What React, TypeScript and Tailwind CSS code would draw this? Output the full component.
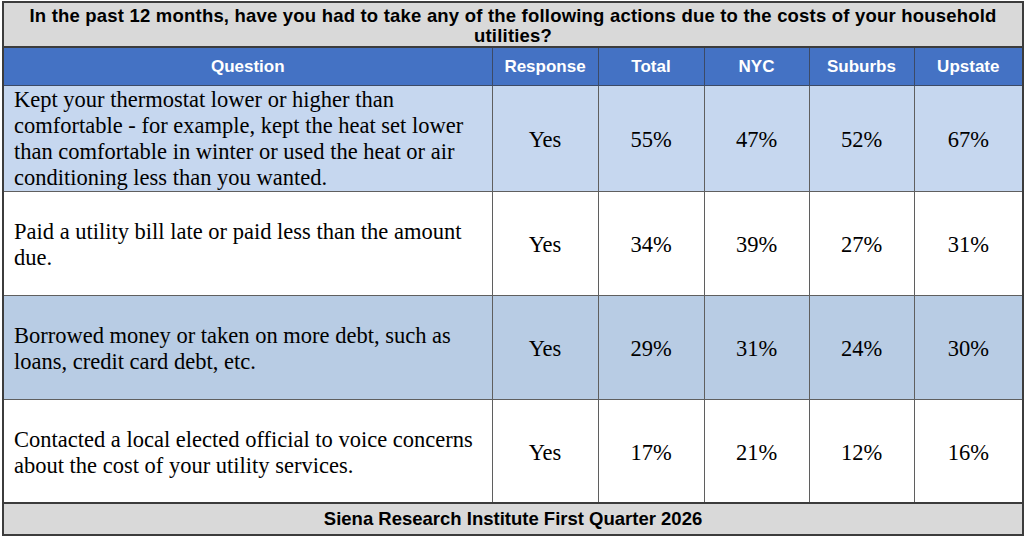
import React from "react";

const rows = [
  {
    q: "Kept your thermostat lower or higher than comfortable - for example, kept the heat set lower than comfortable in winter or used the heat or air conditioning less than you wanted.",
    v: ["Yes", "55%", "47%", "52%", "67%"],
    bg: "bg-[#c6d7ef]",
    qpad: "pt-[1px]",
  },
  {
    q: "Paid a utility bill late or paid less than the amount due.",
    v: ["Yes", "34%", "39%", "27%", "31%"],
    bg: "bg-white",
    qpad: "pt-[4px]",
  },
  {
    q: "Borrowed money or taken on more debt, such as loans, credit card debt, etc.",
    v: ["Yes", "29%", "31%", "24%", "30%"],
    bg: "bg-[#b8cce4]",
    qpad: "pt-[4px]",
  },
  {
    q: "Contacted a local elected official to voice concerns about the cost of your utility services.",
    v: ["Yes", "17%", "21%", "12%", "16%"],
    bg: "bg-white",
    qpad: "pt-[4px]",
  },
];

const headers = ["Question", "Response", "Total", "NYC", "Suburbs", "Upstate"];

export default function App() {
  return (
    <div className="w-[1024px] h-[538px] bg-white pl-[2px] pt-[1px]">
      <table className="table-fixed border-collapse w-[1020px] border-2 border-[#3c3c3c]">
        <colgroup>
          <col className="w-[489px]" />
          <col className="w-[106px]" />
          <col className="w-[106px]" />
          <col className="w-[105px]" />
          <col className="w-[105px]" />
          <col className="w-[109px]" />
        </colgroup>
        <tbody>
          <tr className="h-[45px] bg-[#d9d9d9]">
            <td
              colSpan={6}
              className="border-b-2 border-[#3c3c3c] text-center align-top pt-[3px] px-2 font-['Liberation_Sans',Arial,sans-serif] font-bold text-[18.5px] tracking-[0.2px] leading-[20px] text-black"
            >
              In the past 12 months, have you had to take any of the following actions due to the costs of your household utilities?
            </td>
          </tr>
          <tr className="h-[38px] bg-[#4472c4]">
            {headers.map((h) => (
              <td
                key={h}
                className="border border-[#3c4a66] text-center align-middle font-['Liberation_Sans',Arial,sans-serif] font-bold text-[17px] text-white"
              >
                {h}
              </td>
            ))}
          </tr>
          {rows.map((r, i) => (
            <tr key={i} className={`h-[104px] ${r.bg}`}>
              <td
                className={`border border-[#5f5f5f] align-middle pl-[10px] pr-2 ${r.qpad} font-['Liberation_Serif','Times_New_Roman',serif] text-[22.5px] leading-[26px] text-black`}
              >
                {r.q}
              </td>
              {r.v.map((v, j) => (
                <td
                  key={j}
                  className="border border-[#5f5f5f] text-center align-middle pt-[4px] font-['Liberation_Serif','Times_New_Roman',serif] text-[22.5px] text-black"
                >
                  {v}
                </td>
              ))}
            </tr>
          ))}
          <tr className="h-[32px] bg-[#d9d9d9]">
            <td
              colSpan={6}
              className="border-t-2 border-[#3c3c3c] text-center align-middle font-['Liberation_Sans',Arial,sans-serif] font-bold text-[18.5px] text-black"
            >
              Siena Research Institute First Quarter 2026
            </td>
          </tr>
        </tbody>
      </table>
    </div>
  );
}
